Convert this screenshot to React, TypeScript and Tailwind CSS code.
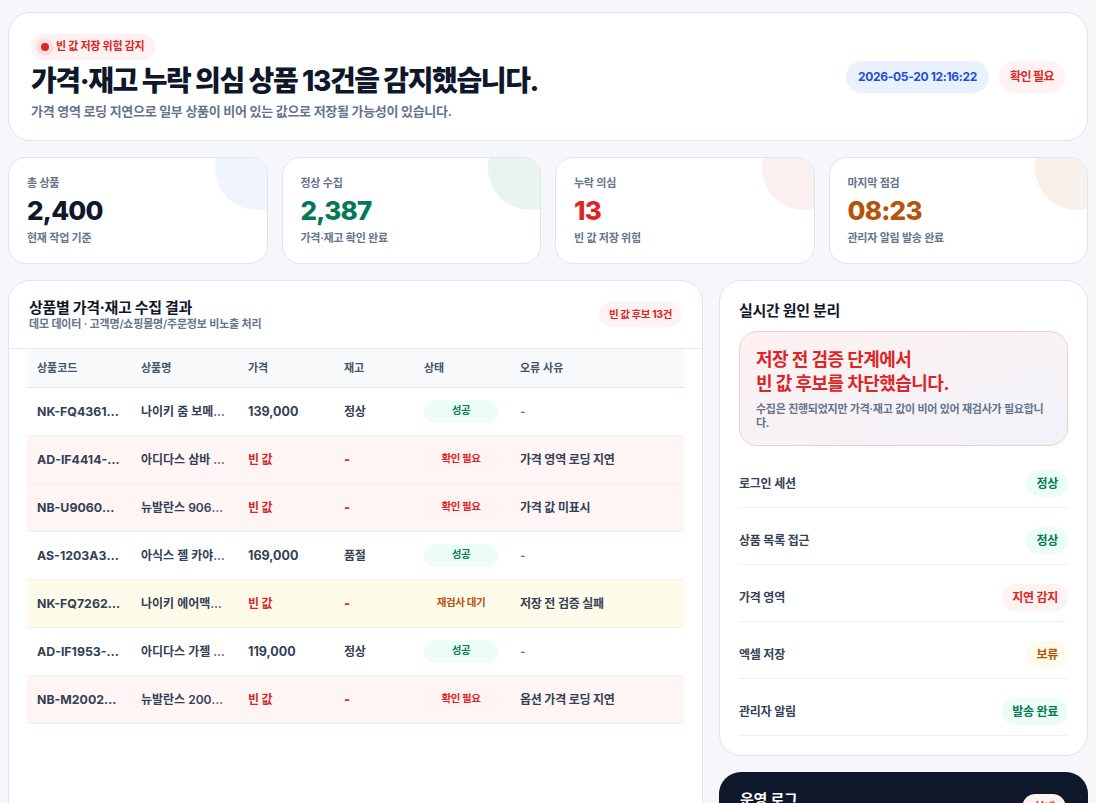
const FONT = "font-['Inter','Noto_Sans_CJK_KR',sans-serif]";

const stats = [
  { label: "총 상품", value: "2,400", note: "현재 작업 기준", color: "text-[#0f172a]", blob: "bg-[#eff4fd]" },
  { label: "정상 수집", value: "2,387", note: "가격·재고 확인 완료", color: "text-[#047857]", blob: "bg-[#e9f3ef]" },
  { label: "누락 의심", value: "13", note: "빈 값 저장 위험", color: "text-[#dc2626]", blob: "bg-[#fbf0f0]" },
  { label: "마지막 점검", value: "08:23", note: "관리자 알림 발송 완료", color: "text-[#b45309]", blob: "bg-[#f8f0eb]" },
];

type Status = "ok" | "bad" | "wait";

const rows: { code: string; name: string; price: string; stock: string; status: Status; reason: string }[] = [
  { code: "NK-FQ4361-100", name: "나이키 줌 보메로 5", price: "139,000", stock: "정상", status: "ok", reason: "-" },
  { code: "AD-IF4414-001", name: "아디다스 삼바 OG 화이트", price: "빈 값", stock: "-", status: "bad", reason: "가격 영역 로딩 지연" },
  { code: "NB-U9060GRY", name: "뉴발란스 9060 그레이", price: "빈 값", stock: "-", status: "bad", reason: "가격 값 미표시" },
  { code: "AS-1203A345-020", name: "아식스 젤 카야노 14", price: "169,000", stock: "품절", status: "ok", reason: "-" },
  { code: "NK-FQ7262-001", name: "나이키 에어맥스 95", price: "빈 값", stock: "-", status: "wait", reason: "저장 전 검증 실패" },
  { code: "AD-IF1953-002", name: "아디다스 가젤 인도어", price: "119,000", stock: "정상", status: "ok", reason: "-" },
  { code: "NB-M2002RXD", name: "뉴발란스 2002R 블랙", price: "빈 값", stock: "-", status: "bad", reason: "옵션 가격 로딩 지연" },
];

const checks = [
  { label: "로그인 세션", value: "정상", cls: "bg-[#ecfdf5] text-[#047857]" },
  { label: "상품 목록 접근", value: "정상", cls: "bg-[#ecfdf5] text-[#047857]" },
  { label: "가격 영역", value: "지연 감지", cls: "bg-[#fef2f2] text-[#dc2626]" },
  { label: "엑셀 저장", value: "보류", cls: "bg-[#fffbeb] text-[#b45309]" },
  { label: "관리자 알림", value: "발송 완료", cls: "bg-[#ecfdf5] text-[#047857]" },
];

function StatusPill({ status }: { status: Status }) {
  const map = {
    ok: { text: "성공", cls: "bg-[#ecfdf5] text-[#047857]" },
    bad: { text: "확인 필요", cls: "bg-[#fef2f2] text-[#dc2626]" },
    wait: { text: "재검사 대기", cls: "bg-[#fffbeb] text-[#b45309]" },
  }[status];
  return (
    <span className={`flex h-[23px] w-[74px] items-center justify-center rounded-full text-[10.5px] font-bold tracking-[-0.4px] ${map.cls}`}>
      {map.text}
    </span>
  );
}

export default function App() {
  return (
    <div className={`${FONT} h-[803px] overflow-hidden bg-[#f5f7fb] px-2 pt-3 tracking-[-0.25px]`}>
      <header className="flex h-[129px] items-center justify-between rounded-[22px] border border-[#dde5f0] bg-white px-[22px]">
        <div>
          <div className="inline-flex h-[26px] items-center gap-[2px] rounded-full bg-[#fef2f2] pr-[11px] pl-[5px] text-[11px] font-bold text-[#dc2626]">
            <span className="flex h-[18px] w-[18px] items-center justify-center rounded-full bg-[#f8e0e0]">
              <span className="h-[8px] w-[8px] rounded-full bg-[#dc2626]" />
            </span>
            빈 값 저장 위험 감지
          </div>
          <h1 className="mt-[2px] text-[28px] leading-[38px] font-extrabold tracking-[-0.05em] text-[#0f172a]">
            가격·재고 누락 의심 상품 13건을 감지했습니다.
          </h1>
          <p className="mt-[1px] text-[13px] leading-[20px] font-semibold tracking-[-0.32px] text-[#64748b]">
            가격 영역 로딩 지연으로 일부 상품이 비어 있는 값으로 저장될 가능성이 있습니다.
          </p>
        </div>
        <div className="flex items-center gap-[10px]">
          <span className="flex h-[32px] items-center rounded-full bg-[#eaf1fe] px-[12px] text-[12px] font-bold tracking-[-0.32px] text-[#1d4ed8]">
            2026-05-20 12:16:22
          </span>
          <span className="flex h-[32px] items-center rounded-full bg-[#fef2f2] px-[11px] text-[12px] font-bold tracking-[-0.6px] text-[#dc2626]">
            확인 필요
          </span>
        </div>
      </header>

      <section className="mt-4 grid grid-cols-4 gap-[14px]">
        {stats.map((s) => (
          <div key={s.label} className="relative h-[107px] overflow-hidden rounded-[18px] border border-[#dde5f0] bg-white px-[18px] pt-[17px]">
            <span className={`absolute -top-[32px] -right-[32px] h-[84px] w-[84px] rounded-full ${s.blob}`} />
            <div className="text-[11px] leading-[16px] font-semibold text-[#64748b]">{s.label}</div>
            <div className={`mt-[3px] text-[26px] leading-[34px] font-extrabold tracking-[-0.03em] ${s.color}`}>{s.value}</div>
            <div className="mt-[2px] text-[11px] leading-[16px] font-semibold text-[#64748b]">{s.note}</div>
          </div>
        ))}
      </section>

      <div className="mt-4 grid grid-cols-[695px_369px] gap-4">
        <section className="h-[600px] rounded-[22px] border border-[#dde5f0] bg-white">
          <div className="flex h-[68px] items-center justify-between border-b border-[#e2e8f0] px-[20px]">
            <div>
              <h2 className="text-[15px] leading-[18px] font-bold tracking-[-0.02em] text-[#0f172a]">상품별 가격·재고 수집 결과</h2>
              <p className="text-[11px] leading-[14px] font-semibold tracking-[-0.2px] text-[#64748b]">데모 데이터 · 고객명/쇼핑몰명/주문정보 비노출 처리</p>
            </div>
            <span className="flex h-[25px] items-center rounded-full bg-[#fef2f2] px-[10px] text-[10.5px] font-bold tracking-[-0.4px] text-[#dc2626]">
              빈 값 후보 13건
            </span>
          </div>
          <div className="px-[18px]">
            <table className="w-[657px] table-fixed border-collapse text-left">
              <colgroup>
                <col className="w-[104px]" />
                <col className="w-[107px]" />
                <col className="w-[96px]" />
                <col className="w-[80px]" />
                <col className="w-[96px]" />
                <col className="w-[174px]" />
              </colgroup>
              <thead>
                <tr className="h-[38px] border-b border-[#e2e8f0] bg-[#f8fafc] text-[11px] font-semibold tracking-normal text-[#475569]">
                  <th className="px-[10px] font-semibold">상품코드</th>
                  <th className="px-[10px] font-semibold">상품명</th>
                  <th className="px-[10px] font-semibold">가격</th>
                  <th className="px-[10px] font-semibold">재고</th>
                  <th className="px-[10px] font-semibold">상태</th>
                  <th className="px-[10px] font-semibold">오류 사유</th>
                </tr>
              </thead>
              <tbody>
                {rows.map((r) => {
                  const empty = r.price === "빈 값";
                  const bg = r.status === "bad" ? "bg-[#fff5f5]" : r.status === "wait" ? "bg-[#fffbeb]" : "bg-white";
                  return (
                    <tr key={r.code} className={`h-[48px] border-b border-[#edf1f6] text-[12px] font-semibold text-[#334155] ${bg}`}>
                      <td className="truncate px-[10px] pt-[2px] text-[12.35px] font-bold tracking-normal">{r.code}</td>
                      <td className="truncate px-[10px] pt-[2px] tracking-normal">{r.name}</td>
                      <td className={`px-[10px] pt-[2px] font-bold ${empty ? "text-[#dc2626]" : "text-[12.5px] tracking-normal"}`}>{r.price}</td>
                      <td className={`px-[10px] pt-[2px] ${empty ? "text-[13px] font-extrabold text-[#dc2626]" : ""}`}>{r.stock}</td>
                      <td className="px-[10px]">
                        <StatusPill status={r.status} />
                      </td>
                      <td className={`px-[10px] pt-[2px] ${r.reason === "-" ? "text-[#64748b]" : ""}`}>{r.reason}</td>
                    </tr>
                  );
                })}
              </tbody>
            </table>
          </div>
        </section>

        <aside className="flex flex-col gap-4">
          <section className="rounded-[22px] border border-[#dde5f0] bg-white px-[19px] pt-[19px] pb-[19px]">
            <h2 className="text-[15px] leading-[22px] font-bold tracking-[-0.02em] text-[#0f172a]">실시간 원인 분리</h2>
            <div className="mt-[9px] h-[115px] rounded-[18px] border border-[#f3cfd0] bg-gradient-to-br from-[#fef1f1] to-[#f0f3fa] px-[16px] pt-[16px]">
              <div className="text-[18px] leading-[24px] font-bold tracking-[-0.03em] text-[#dc2626]">
                저장 전 검증 단계에서
                <br />
                빈 값 후보를 차단했습니다.
              </div>
              <p className="mt-[6px] text-[11px] leading-[14px] font-semibold text-[#64748b]">
                수집은 진행되었지만 가격·재고 값이 비어 있어 재검사가 필요합니다.
              </p>
            </div>
            <div className="mt-[24px] flex flex-col gap-[19px]">
              {checks.map((c) => (
                <div key={c.label} className="flex items-center justify-between border-b border-[#edf1f6] pb-[10px]">
                  <span className="text-[12px] font-semibold text-[#334155]">{c.label}</span>
                  <span className={`flex h-[27px] items-center rounded-full px-[10px] text-[12px] font-bold ${c.cls}`}>{c.value}</span>
                </div>
              ))}
            </div>
          </section>

          <section className="h-[200px] rounded-[22px] bg-[#0f172a] pt-[17px] pr-[22px] pl-[21px]">
            <div className="flex items-start justify-between">
              <h2 className="text-[15px] leading-[22px] font-bold text-white">운영 로그</h2>
              <span className="mt-[5px] flex h-[27px] items-center rounded-full bg-[#fef2f2] px-[11px] text-[12px] font-bold text-[#dc2626]">
                실패
              </span>
            </div>
          </section>
        </aside>
      </div>
    </div>
  );
}
